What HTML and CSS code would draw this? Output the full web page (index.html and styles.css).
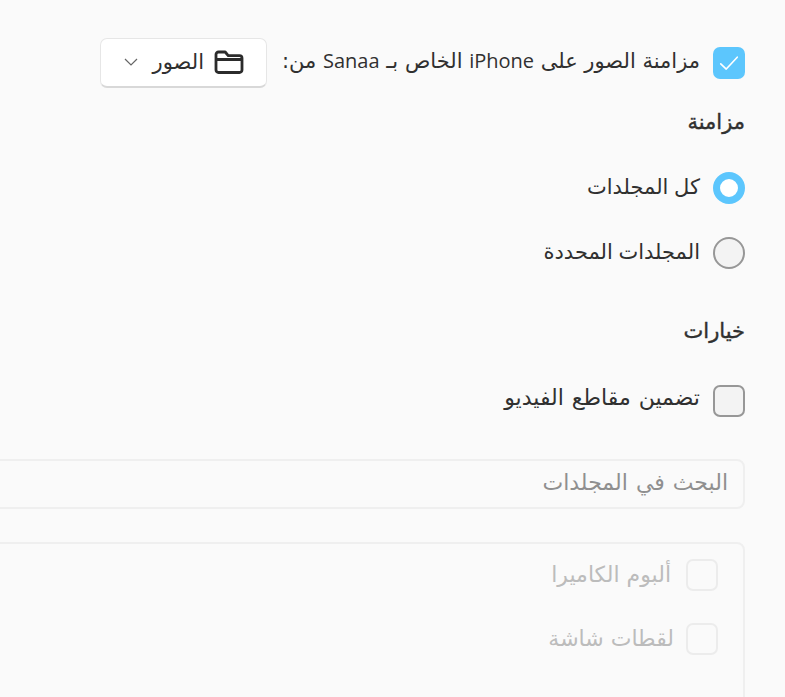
FILE: index.html
```html
<!DOCTYPE html>
<html lang="ar" dir="rtl">
<head>
<meta charset="utf-8">
<title>مزامنة الصور</title>
<link rel="stylesheet" href="styles.css">
</head>
<body>
<main class="page">
  <div class="sync-row">
    <label class="option">
      <span class="box box-checked">
        <svg class="tick" viewBox="0 0 16 16" width="22" height="22"><path d="M2 8.600 6 12.400 14 3.800" fill="none" stroke="#fff" stroke-width="1.200" stroke-linecap="round" stroke-linejoin="round"/></svg>
      </span>
      <span class="label">مزامنة الصور على <span class="latin">iPhone</span> الخاص بـ <span class="latin">Sanaa</span> من:</span>
    </label>
    <button class="select" type="button">
      <svg class="folder" viewBox="0 0 30 26" width="30" height="26"><path d="M2 21V5.500A2.500 2.500 0 0 1 4.500 3h6.700l3 3.600H25.500A2.500 2.500 0 0 1 28 9.100V21a2.500 2.500 0 0 1-2.500 2.500h-21A2.500 2.500 0 0 1 2 21ZM2 10.500H28" fill="none" stroke="#2b2b2b" stroke-width="2.800" stroke-linejoin="round"/></svg>
      <span class="select-text">الصور</span>
      <svg class="chevron" viewBox="0 0 14 8" width="14" height="8"><path d="M1 1l6 6 6-6" fill="none" stroke="#666" stroke-width="1.200"/></svg>
    </button>
  </div>

  <h2 class="heading heading-sync">مزامنة</h2>
  <label class="option option-radio1"><span class="radio radio-on"></span><span class="label label-radio">كل المجلدات</span></label>
  <label class="option option-radio2"><span class="radio"></span><span class="label label-radio">المجلدات المحددة</span></label>

  <h2 class="heading heading-options">خيارات</h2>
  <label class="option option-video"><span class="box"></span><span class="label label-large">تضمين مقاطع الفيديو</span></label>

  <div class="search">البحث في المجلدات</div>

  <section class="list">
    <label class="option list-item"><span class="box box-faint"></span><span class="label-faint">ألبوم الكاميرا</span></label>
    <label class="option list-item list-item-close"><span class="box box-faint"></span><span class="label-faint">لقطات شاشة</span></label>
  </section>
</main>
</body>
</html>
```
FILE: styles.css
```css
* { box-sizing: border-box; }
html, body { margin: 0; height: 100%; overflow: hidden; background: #fafafa; }
body { font-family: "DejaVu Sans", sans-serif; color: #303030; font-size: 21px; }
.page { width: 900px; padding: 38px 40px 0 0; }
.latin { font-family: "Open Sans", "Noto Sans", sans-serif; font-size: 20px; }
.sync-row { display: flex; align-items: center; gap: 15px; height: 49px; }
.option { display: flex; align-items: center; gap: 13px; }
.label { line-height: 32px; position: relative; top: -2px; }
.label-radio { top: -1px; word-spacing: -1px; }
.label-large { font-size: 22px; word-spacing: 1px; top: -3px; }
.box { width: 32px; height: 32px; border-radius: 7px; border: 2px solid #979797; background: #f3f3f3; flex: none; display: flex; align-items: center; justify-content: center; }
.box-checked { background: #5cc6fd; border: 0; margin-top: 1px; }
.box-faint { border: 2px solid #ececec; background: #fafafa; }
.radio { width: 32px; height: 32px; border-radius: 50%; border: 2px solid #979797; background: #f3f3f3; flex: none; }
.radio-on { border: 7px solid #5cc6fd; background: #fff; }
.select { width: 167px; height: 50px; display: flex; align-items: center; padding: 0 22px 0 23px; gap: 10px; background: #fff; border: 1px solid #e6e6e6; border-bottom: 2px solid #d8d8d8; border-radius: 7px; font: inherit; color: inherit; }
.select-text { flex: 1; text-align: right; }
.heading { font-size: 21px; font-weight: 400; -webkit-text-stroke: 0.4px #303030; margin: 0; line-height: 32px; }
.heading-sync { margin-top: 19px; }
.option-radio1 { margin-top: 34px; }
.option-radio2 { margin-top: 33px; }
.heading-options { margin-top: 46px; }
.option-video { margin-top: 38px; }
.search { margin-top: 42px; height: 50px; border: 2px solid #efefef; border-radius: 8px; padding: 0 15px; line-height: 44px; color: #8f8f8f; font-size: 22px; word-spacing: 1px; }
.list { margin-top: 33px; border: 2px solid #efefef; border-radius: 8px; padding: 15px 25px 0 0; height: 300px; display: flex; flex-direction: column; gap: 32px; }
.list-item { gap: 15px; }
.list-item-close { gap: 12px; }
.label-faint { color: #bcbcbc; line-height: 32px; font-size: 22px; }
```
